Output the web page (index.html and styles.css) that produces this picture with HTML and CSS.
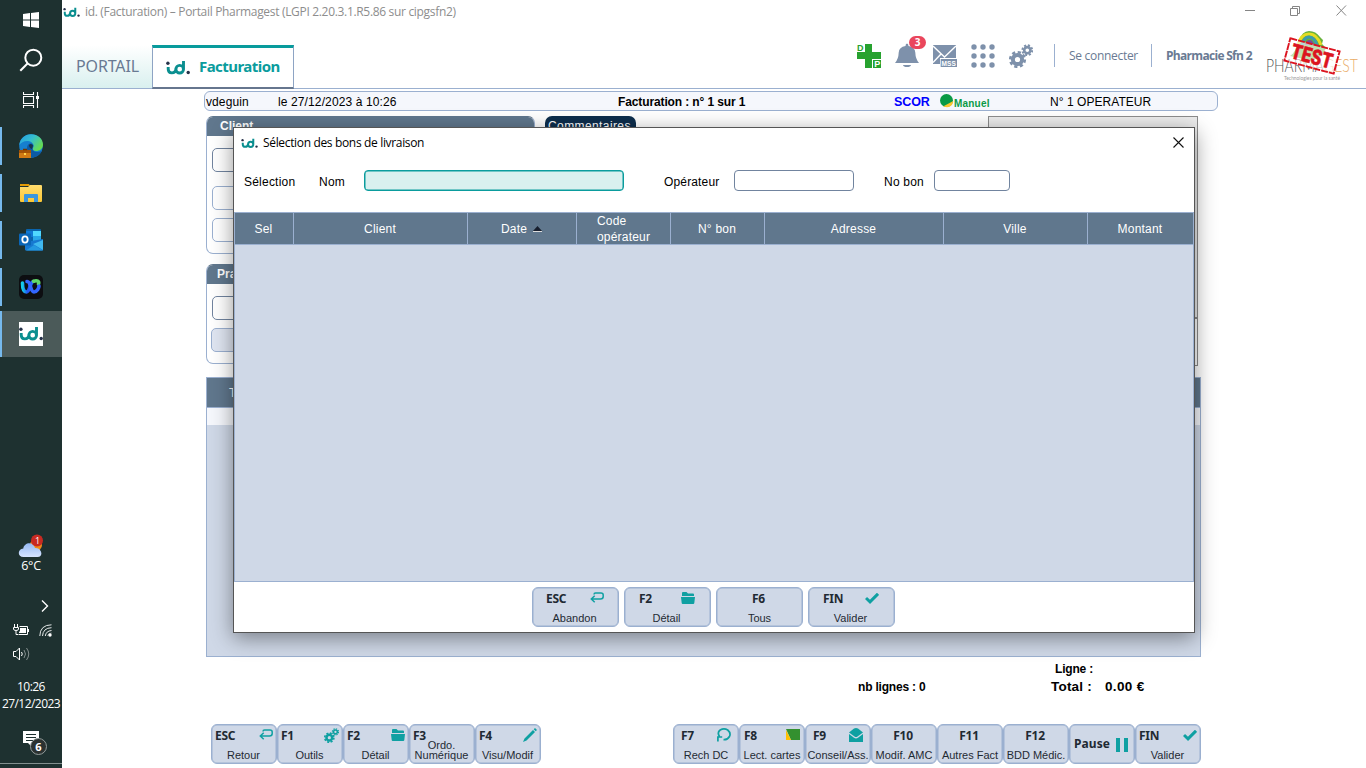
FILE: index.html
```html
<!DOCTYPE html>
<html lang="fr">
<head>
<meta charset="utf-8">
<title>id. (Facturation) – Portail Pharmagest</title>
<link rel="stylesheet" href="styles.css">
</head>
<body>
<svg class="defs" width="0" height="0">
  <defs>
    <symbol id="logo" viewBox="0 0 24 16">
      <path d="M2.200 7v2c0 2.600 1.300 3.900 3.600 3.900 2.300 0 3.900-1.500 4.100-4M13.700 5.400a3.800 3.800 0 1 0 0 7.600 3.800 3.800 0 0 0 0-7.600M17.500 1V9.500" fill="none" stroke="#0b8f90" stroke-width="2.900"/>
      <circle cx="1.900" cy="3.200" r="1.700" fill="#26324a"/><circle cx="22.200" cy="12.500" r="1.700" fill="#26324a"/>
    </symbol>
    <symbol id="return" viewBox="0 0 14 12"><path d="M4 2.500Q4 1 5.500 1H11Q13.200 1 13.200 3V4.500Q13.200 7 10.500 7H1.500M4.700 3.700L1.300 7L4.700 10.300" fill="none" stroke="#0fa0a2" stroke-width="1.500"/></symbol>
    <symbol id="folder" viewBox="0 0 14 12"><path d="M1 4V1Q1 0 2 0H5.500L7 1.500H12Q13 1.500 13 2.500V4ZM0 5H14L13.300 11Q13.200 12 12.300 12H1.700Q.8 12 .7 11Z" fill="#0fa0a2"/></symbol>
    <symbol id="check" viewBox="0 0 14 11"><path d="M1 5L5 8.800L13 .8" fill="none" stroke="#0fa0a2" stroke-width="3"/></symbol>
    <symbol id="gears" viewBox="0 0 24 24">
      <g fill="none" stroke="currentColor">
        <circle cx="8.500" cy="15.500" r="4.600" stroke-width="4"/>
        <circle cx="8.500" cy="15.500" r="7.300" stroke-width="2.600" stroke-dasharray="3.200 2.533"/>
        <circle cx="18.300" cy="6.200" r="3.100" stroke-width="2.600"/>
        <circle cx="18.300" cy="6.200" r="4.900" stroke-width="2" stroke-dasharray="2.100 1.748"/>
      </g>
    </symbol>
    <linearGradient id="edge" x1="0" y1="0" x2="1" y2=".6"><stop offset="0" stop-color="#249be0"/><stop offset=".5" stop-color="#35bdd0"/><stop offset="1" stop-color="#67dc50"/></linearGradient>
    <linearGradient id="cloud" x1="0" y1="0" x2="0" y2="1"><stop offset="0" stop-color="#94b8f3"/><stop offset="1" stop-color="#d6e4ff"/></linearGradient>
    <linearGradient id="webex" x1="0" y1="0" x2="1" y2="0"><stop offset="0" stop-color="#14cbe8"/><stop offset=".45" stop-color="#2454f5"/><stop offset="1" stop-color="#2966ff"/></linearGradient>
    <linearGradient id="file" x1="0" y1="0" x2="0" y2="1"><stop offset="0" stop-color="#ffdc6e"/><stop offset="1" stop-color="#fbc735"/></linearGradient>
  </defs>
</svg>

<nav class="taskbar">
  <div class="sys"><svg width="16" height="16" viewBox="0 0 16 16" fill="#fff"><path d="M0 2L7 1V7.500H0ZM8 .9L16 0V7.500H8ZM0 8.500H7V15L0 14ZM8 8.500H16V16L8 15Z"/></svg></div>
  <div class="sys"><svg width="24" height="24" viewBox="0 0 24 24" fill="none" stroke="#fff" stroke-width="2"><circle cx="14.300" cy="9.700" r="8"/><path d="M8.500 15.500L1.300 22.700"/></svg></div>
  <div class="sys"><svg width="16" height="16" viewBox="0 0 16 16" fill="none" stroke="#fff"><path d="M.5 0V2.500H10.500V0M.5 16V13.500H10.500V16M.5 4.500H10.500V11.500H.5ZM14.500 0V16" stroke-width="1.100"/><path d="M13 4H16V7H13Z" fill="#fff" stroke="none"/></svg></div>
  <div class="apps">
    <div class="task"><svg width="24" height="24" viewBox="0 0 24 24"><circle cx="12" cy="12" r="11.800" fill="#167fce"/><path d="M.3 11C1 4.500 6 .2 12 .2C19 .2 24 5 24 10.500C24 15 20.500 17 17 17C14 17 13 15.500 14 14C16 10.500 13 7.500 9 7C5 6.700 2 8.500 .3 11Z" fill="url(#edge)"/><path d="M8 14C8 11 10 9 12.500 9.500C15 10.500 14.500 12.500 13.700 14C13 16 15 18 18 18Q21 18 23 16.500C21 22 15 24.500 10.500 23.200C7 21 7.500 17 8 14Z" fill="#0c5aa5"/><path d="M10 11Q12 8.700 14 11.500L13 15Q10 14 10 11" fill="#18334b"/><rect y="16" width="12" height="8" fill="#d17a13"/><path d="M0 16H12V19H0Z" fill="#a45206"/><path d="M4 15.500H8" stroke="#6f3600" stroke-width="1.500"/><rect x="5" y="19" width="2" height="2" fill="#ffd24a"/></svg></div>
    <div class="task"><svg width="22" height="19" viewBox="0 0 22 19"><path d="M0 0H9L10 2H0Z" fill="#e29a05"/><path d="M0 3H8L10 1H21Q22 1 22 2V17Q22 18 21 18H1Q0 18 0 17Z" fill="url(#file)"/><path d="M4 18V11Q4 10 5 10H17Q18 10 18 11V18H14V14H8V18Z" fill="#3a96dd"/></svg></div>
    <div class="task"><svg width="24" height="24" viewBox="0 0 24 24"><rect x="7" y="1" width="15" height="17" rx="1" fill="#0a64ad"/><path d="M7 3H14V9H7Z" fill="#0f78d4"/><path d="M14 3H22V9H14Z" fill="#50d9ff"/><path d="M14 8H22V13H14Z" fill="#28a8ea"/><path d="M6 14L24 11V22Q24 22.500 23 22.500H7Q6 22.500 6 21.500Z" fill="#1678d0"/><path d="M24 12V22L14 16Z" fill="#40b9ef"/><path d="M7 22.500L15 17L24 22.500Z" fill="#2398e0"/><rect y="5.500" width="12" height="12" rx="1" fill="#0a66b8"/><ellipse cx="6" cy="11.500" rx="2.700" ry="3.100" fill="none" stroke="#fff" stroke-width="1.800"/></svg></div>
    <div class="task"><svg width="24" height="24" viewBox="0 0 24 24"><rect width="24" height="24" rx="5" fill="#0d0e11"/><g fill="none" stroke-linecap="round" stroke-width="3.600"><path d="M3.500 8C3.500 14 5 17 7.500 17C11 17 11 6.500 14.500 6.500" stroke="url(#webex)"/><path d="M14.500 6.200C18 5 20.500 6 19.500 9" stroke="#60d86a"/><path d="M8 6.500C12 6 11 17 15 17C18 17 20 13 20 11" stroke="#3266ff"/></g></svg></div>
    <div class="task active"><span class="idtile"><svg width="24" height="16"><use href="#logo"/></svg></span></div>
  </div>
  <div class="weather">
    <svg width="26" height="25" viewBox="0 0 26 25"><circle cx="18" cy="11" r="6" fill="#f08a1a"/><path d="M5.500 23C-1 23-.5 15 5.300 14.500C6 8 15.500 7 17 14C23 13 26.500 22.500 19.500 23Z" fill="url(#cloud)"/><circle cx="19" cy="6.500" r="6" fill="#c82a22"/></svg>
    <b class="alert">1</b>
    <span>6°C</span>
  </div>
  <div class="chev"><svg width="8" height="12" viewBox="0 0 8 12" fill="none" stroke="#fff" stroke-width="1.400"><path d="M1 .5L6.500 6L1 11.500"/></svg></div>
  <div class="tray">
    <svg width="17" height="13" viewBox="0 0 17 13" fill="none" stroke="#fff"><path d="M6.500 2.500H14.500V10.500H5.500M1.500 0V3M4.500 0V3M.5 3.500H5.500V5Q5.500 6.500 3 6.500Q.5 6.500 .5 5ZM3 6.500V10.500H5"/><path d="M7 4H13V9H6V7.500H7Z" fill="#fff" stroke="none"/><path d="M15.500 5V8"/></svg>
    <svg width="14" height="13" viewBox="0 0 14 13" fill="none" stroke="#e4e8e8"><path d="M.8 12Q1 1 12.500 .8M3.500 12Q4 4 12.500 3.700M6.300 12Q7 7 12.500 6.500" /><circle cx="11" cy="11" r="1.700" fill="#fff" stroke="none"/><path d="M8.500 12Q9 9.500 12.500 9" opacity=".6"/></svg>
    <svg width="17" height="14" viewBox="0 0 17 14" fill="none" stroke="#fff"><path d="M.5 4.500H3L6.500 1V13L3 9.500H.5Z"/><path d="M8.500 5Q10 7 8.500 9"/><path d="M11 3Q14 7 11 11M13.500 1Q18 7 13.500 13" opacity=".45"/></svg>
  </div>
  <div class="clock"><span>10:26</span><span>27/12/2023</span></div>
  <div class="notif"><svg width="16" height="16" viewBox="0 0 16 16"><path d="M0 0H16V12H9V16L5 12H0Z" fill="#fff"/><path d="M3 3.500H13M3 6.500H13M3 9.500H10" stroke="#1e3130"/></svg><b>6</b></div>
</nav>

<main class="app">
  <div class="titlebar">
    <svg width="17" height="11"><use href="#logo"/></svg>
    <span class="wtitle">id. (Facturation) – Portail Pharmagest (LGPI 2.20.3.1.R5.86 sur cipgsfn2)</span>
    <svg class="winctl" width="102" height="12" viewBox="0 0 102 12" fill="none" stroke="#858585"><path d="M0 5.500H10M45.500 3.500H52.500V10.500H45.500ZM47.500 3V1.500H54.500V8.500H53M91.500 .5L101 10.500M101 .5L91.500 10.500"/></svg>
  </div>
  <header class="header">
    <div class="tab portal"><span>PORTAIL</span></div>
    <div class="tab current"><svg width="24" height="16"><use href="#logo"/></svg><span>Facturation</span></div>
    <div class="tools">
      <svg width="26" height="26" viewBox="0 0 26 26"><path d="M9 1H16V9H25V16H16V25H9V16H1V9H9Z" fill="#27a22f"/><rect x="0" y="0" width="8.500" height="8" fill="#fff"/><path d="M17 17H25V25H17Z" fill="#27a22f"/><text x="1" y="7.700" class="dp-d">D</text><text x="18.200" y="24.200" class="dp-p">P</text></svg>
      <div class="bell"><svg width="24" height="24" viewBox="0 0 24 24" fill="#7e91ab"><path d="M0 20Q3.500 16 3.700 9.500Q4 4 10.500 3Q10.500 .5 12 .5T13.500 3Q20 4 20.300 9.500Q20.500 16 24 20ZM8 22H16Q15.500 24 12 24T8 22Z"/></svg><b>3</b></div>
      <svg class="mail" width="25" height="23" viewBox="0 0 25 23"><path d="M0 0H23V13H7V19H0Z" fill="#7e91ab"/><path d="M0 1L11.500 12L23 1M0 17.500L8 9" stroke="#fff" fill="none" stroke-width="1.400"/><path d="M7 13H25V23H7Z" fill="#fff"/><path d="M7.700 14H24V22H7.700Z" fill="#7e91ab"/><text x="8.500" y="20.500" class="mss">MSS</text></svg>
      <svg width="24" height="24" viewBox="0 0 24 24" fill="#7e91ab"><circle cx="3" cy="3" r="2.700"/><circle cx="12" cy="3" r="2.700"/><circle cx="21" cy="3" r="2.700"/><circle cx="3" cy="12" r="2.700"/><circle cx="12" cy="12" r="2.700"/><circle cx="21" cy="12" r="2.700"/><circle cx="3" cy="21" r="2.700"/><circle cx="12" cy="21" r="2.700"/><circle cx="21" cy="21" r="2.700"/></svg>
      <svg class="cog" width="24" height="24"><use href="#gears"/></svg>
    </div>
    <div class="login"><span>Se connecter</span></div>
    <div class="pharm"><span>Pharmacie Sfn 2</span></div>
    <div class="brand">
      <svg width="99" height="60" viewBox="0 0 99 60">
        <path d="M24 28Q30 24 33 13Q36 3 43 3Q50 3 54 9L57 12L56 16L60 20L58 24Q50 35 38 31Z" fill="#68b23d"/>
        <path d="M32 17Q35 6 43 6T55 17" fill="none" stroke="#e5dc22" stroke-width="3"/><path d="M36 17Q38 9 43 9T51 17" fill="none" stroke="#3c9dab" stroke-width="3"/><path d="M39 17Q40 12 43.500 12T48 17" fill="#794b99"/>
        <g transform="scale(.82 1)"><text x="0" y="44" class="ph1">PHARMA<tspan class="ph2">GEST</tspan></text></g>
        <text x="18" y="52" class="ph3" textLength="56" lengthAdjust="spacingAndGlyphs">Technologies pour la santé</text>
        <g transform="translate(46 28) rotate(15)"><rect x="-25.500" y="-11.500" width="51" height="23" fill="#fff" fill-opacity=".6" stroke="#dc1420" stroke-width="1.900" stroke-dasharray="7 1"/><text x="-21" y="7.500" class="stamp" textLength="42" lengthAdjust="spacingAndGlyphs">TEST</text></g>
      </svg>
    </div>
  </header>

  <section class="work">
    <div class="info">
      <span class="i1">vdeguin</span><span class="i2">le 27/12/2023 à 10:26</span><b class="i3">Facturation : n° 1 sur 1</b><b class="i4">SCOR</b>
      <svg width="14" height="14" viewBox="0 0 14 14"><circle cx="6.500" cy="6.500" r="6.500" fill="#0a9a45"/><path d="M3 12.500L13.300 7Q12.500 13 7 13.300Z" fill="#fbc62c"/></svg>
      <b class="i5">Manuel</b><span class="i6">N° 1 OPERATEUR</span>
    </div>
    <div class="panels">
      <div class="left">
        <div class="panel client"><h2><span>Client</span></h2><i class="field dark"></i><i class="field second"></i><i class="field third"></i></div>
        <div class="panel prat"><h2><span>Praticien</span></h2><i class="field dark"></i><i class="field fill"></i></div>
      </div>
      <div class="comment"><span>Commentaires</span></div>
      <div class="side"><div></div><div></div></div>
    </div>
    <div class="lines"><div class="lhead"><span>T</span></div><div class="lrow"></div></div>
    <div class="totals">
      <b class="nb">nb lignes : 0</b>
      <div class="sum"><b class="lig">Ligne :</b><b class="tot">Total :</b><b class="amt">0.00 €</b></div>
    </div>
    <div class="keys">
      <div class="key"><b>ESC</b><svg width="14" height="12"><use href="#return"/></svg><span>Retour</span></div>
      <div class="key"><b>F1</b><svg class="teal" width="15" height="15"><use href="#gears"/></svg><span>Outils</span></div>
      <div class="key"><b>F2</b><svg width="14" height="12"><use href="#folder"/></svg><span>Détail</span></div>
      <div class="key two"><b>F3</b><span>Ordo.<br>Numérique</span></div>
      <div class="key"><b>F4</b><svg width="14" height="14" viewBox="0 0 14 14" fill="#0fa0a2"><path d="M0 14L1.500 10.500L10 2L12 4L3.500 12.500ZM10.700 1.300L12 0L14 2L12.700 3.300Z"/></svg><span>Visu/Modif</span></div>
      <div class="spacer"></div>
      <div class="key r7"><b>F7</b><svg width="14" height="14" viewBox="0 0 14 14" fill="none" stroke="#0fa0a2" stroke-width="1.700"><path d="M2.500 8.500Q-.2 4.500 3.200 2Q7 -.2 10.700 2Q14.200 5 12.500 8.500Q10.500 12 6.500 11.700M.9 13.500V9H5.200"/></svg><span>Rech DC</span></div>
      <div class="key r8"><b>F8</b><svg width="14" height="12" viewBox="0 0 14 12"><path d="M0 0H14V11H5Z" fill="#33902f"/><path d="M0 1L5 11H0Z" fill="#ffc000"/></svg><span>Lect. cartes</span></div>
      <div class="key r7"><b>F9</b><svg width="14" height="14" viewBox="0 0 14 14" fill="#0fa0a2"><path d="M0 4.500L5 .6Q7 -.6 9 .6L14 4.500L8.500 8.500Q7 9.500 5.500 8.500ZM0 6L5 9.800Q7 11.200 9 9.800L14 6V14H0Z"/></svg><span>Conseil/Ass.</span></div>
      <div class="key mid"><b>F10</b><span>Modif. AMC</span></div>
      <div class="key mid"><b>F11</b><span>Autres Fact</span></div>
      <div class="key mid"><b>F12</b><span>BDD Médic.</span></div>
      <div class="key pause"><b>Pause</b><svg width="12" height="14" fill="#0fa0a2"><path d="M0 0H4V14H0ZM8 0H12V14H8Z"/></svg></div>
      <div class="key"><b>FIN</b><svg width="14" height="11"><use href="#check"/></svg><span>Valider</span></div>
    </div>
  </section>
</main>

<section class="modal">
  <div class="mtitle"><svg width="17" height="11"><use href="#logo"/></svg><span>Sélection des bons de livraison</span><svg class="close" width="11" height="11" viewBox="0 0 11 11" fill="none" stroke="#111" stroke-width="1.100"><path d="M.5 .5L10.500 10.500M10.500 .5L.5 10.500"/></svg></div>
  <div class="filters">
    <span class="fl-sel">Sélection</span><span class="fl-nom">Nom</span><i class="inp nom"></i><span class="fl-op">Opérateur</span><i class="inp op"></i><span class="fl-no">No bon</span><i class="inp no"></i>
  </div>
  <div class="grid">
    <div class="ghead"><span>Sel</span><span>Client</span><span>Date <svg width="9" height="6" viewBox="0 0 9 6"><path d="M4.500 0L9 5H0Z" fill="#171e2d"/><path d="M0 5.500H9" stroke="#ddd"/></svg></span><span class="code">Code<br>opérateur</span><span>N° bon</span><span>Adresse</span><span>Ville</span><span>Montant</span></div>
    <div class="gbody"></div>
  </div>
  <div class="mkeys">
    <div class="key"><b>ESC</b><svg width="14" height="12"><use href="#return"/></svg><span>Abandon</span></div>
    <div class="key"><b>F2</b><svg width="14" height="12"><use href="#folder"/></svg><span>Détail</span></div>
    <div class="key mid"><b>F6</b><span>Tous</span></div>
    <div class="key"><b>FIN</b><svg width="14" height="11"><use href="#check"/></svg><span>Valider</span></div>
  </div>
</section>
</body>
</html>
```
FILE: styles.css
```css
* { box-sizing: border-box; }
body { margin: 0; width: 1366px; height: 768px; overflow: hidden; display: flex; position: relative; background: #fff; font: 12px/16px "Liberation Sans", Arial, sans-serif; color: #000; }
svg { display: block; flex: none; }
span, b { white-space: nowrap; }
.defs { position: absolute; }

/* Windows taskbar */
.taskbar { width: 62px; height: 768px; background: #1e3130; color: #fff; display: flex; flex-direction: column; flex: none; font-family: "Open Sans", sans-serif; }
.sys { height: 40px; display: flex; align-items: center; justify-content: center; }
.apps { display: flex; flex-direction: column; padding-top: 2px; }
.task { height: 38px; margin: 5px 0 4px; border-left: 2px solid #76b9ed; display: flex; align-items: center; justify-content: center; padding-right: 2px; }
.task.active { height: 46px; margin: 1px 0 0; background: #4b5a59; }
.idtile { width: 24px; height: 24px; background: #fff; display: flex; align-items: center; }
.weather { margin-top: 177px; height: 41px; display: flex; flex-direction: column; align-items: center; position: relative; }
.weather span { font-size: 12.500px; line-height: 15px; margin-top: -1px; letter-spacing: -.3px; }
.alert { position: absolute; left: 35px; top: -1px; font-size: 9px; font-weight: 400; }
.chev { height: 14px; margin: 25px 0 0 41px; }
.tray { display: grid; grid-template-columns: 26px 14px; row-gap: 10px; margin: 10px 0 1px 13px; align-items: center; }
.clock { display: flex; flex-direction: column; align-items: center; margin-top: 16px; line-height: 17px; font-size: 12px; letter-spacing: -.55px; }
.notif { margin: 19px 0 0 23px; height: 32px; position: relative; }
.notif b { position: absolute; left: 7px; top: 7px; width: 17px; height: 17px; border: 1px solid #929b9a; border-radius: 50%; background: #2b3231; font-size: 11px; line-height: 15px; text-align: center; }
.taskbar::after { content: ""; border-top: 1px solid #82908f; }

/* Window frame and header */
.app { width: 1304px; display: flex; flex-direction: column; }
.titlebar { height: 24px; display: flex; align-items: center; padding: 0 19px 0 1px; color: #8d8d8d; font-family: "Open Sans", sans-serif; }
.wtitle { margin-left: 5px; font-size: 12px; letter-spacing: -.32px; }
.winctl { margin: -3px 0 0 auto; }
.header { height: 65px; display: flex; align-items: flex-end; border-bottom: 1px solid #9bb0d0; font-family: "Noto Sans", sans-serif; color: #697a93; }
.tab { display: flex; align-items: center; }
.portal { width: 90px; height: 43px; padding: 0 0 2px 14px; background: linear-gradient(#fff, #d9f0ef); font-size: 16px; letter-spacing: -.15px; }
.current { width: 142px; height: 44px; margin-bottom: -1px; background: #fff; border: 1px solid #8ea4c4; border-top: 3px solid #089b9c; border-bottom: 2px solid #66768e; padding-left: 13px; gap: 9px; color: #0a9c9d; font-weight: 700; font-size: 15px; letter-spacing: -.55px; }
.current span { margin-top: -4px; }
.tools { display: flex; align-items: center; height: 64px; margin-left: 562px; gap: 13px; }
.bell { position: relative; margin-top: -2px; }
.bell b { position: absolute; left: 14px; top: -7px; width: 17px; height: 13px; border-radius: 7px; background: #ea465c; color: #fff; font-size: 10px; line-height: 13px; text-align: center; }
.tools .mail { margin: 0 0 0 1px; }
.cog { color: #7e91ab; margin-left: 1px; }
.dp-d, .dp-p { font: 700 9px "Liberation Sans", sans-serif; fill: #27a22f; }
.dp-p { fill: #fff; }
.mss { font: 700 6.500px "Liberation Sans", sans-serif; fill: #fff; letter-spacing: .1px; }
.login, .pharm { height: 23px; margin-bottom: 21px; border-left: 1px solid #9bb0d0; padding-left: 14px; font: 12px/23px "Open Sans", sans-serif; letter-spacing: -.3px; }
.login { margin-left: 21px; width: 97px; }
.pharm { width: 115px; font-weight: 700; letter-spacing: -.7px; }
.brand { height: 60px; }
.ph1 { font: 300 17px Lato, sans-serif; fill: #555; }
.ph2 { fill: #e9ac65; }
.ph3 { font: 6px Lato, sans-serif; fill: #999; }
.stamp { font: 900 21px Roboto, sans-serif; fill: #dc1420; stroke: #dc1420; stroke-width: .5px; }

/* Invoice screen behind the dialog */
.work { padding: 2px 0 0 142px; }
.info { width: 1014px; height: 20px; display: flex; align-items: center; background: #f5f7fc; border: 1px solid #9bb0d0; border-radius: 6px; padding: 1px 0 0 1px; }
.i1 { width: 72px; letter-spacing: .1px; } .i2 { width: 340px; letter-spacing: .12px; } .i3 { width: 276px; letter-spacing: -.12px; } .i4 { width: 46px; color: #00f; font-size: 12.500px; letter-spacing: -.1px; }
.info svg { margin-top: -2px; }
.i5 { width: 96px; padding-top: 4px; color: #0a9a45; font-size: 10px; letter-spacing: .2px; } .i6 { letter-spacing: .05px; }
.panels { display: flex; height: 266px; padding: 5px 0 0 2px; }
.left { width: 329px; }
.panel { border: 1px solid #9bb0d0; border-top-color: #60778d; border-radius: 7px; overflow: hidden; }
.panel h2 { margin: 0; height: 19px; background: #60778d; color: #fff; font-size: 12px; line-height: 18px; padding-left: 13px; }
.client { height: 138px; } .prat { height: 100px; margin-top: 10px; }
.prat h2 { padding-left: 10px; }
.field { display: block; width: 250px; height: 24px; margin: 12px 0 0 5px; border: 1px solid #9bb0d0; border-radius: 5px; background: #fff; }
.field.dark { border-color: #71849f; }
.field.second { margin-top: 14px; } .field.third { margin-top: 8px; }
.field.fill { margin: 8px 0 0 4px; background: #dfe5f1; }
.comment { margin-left: 10px; width: 91px; height: 22px; background: #0d2e4d; border-radius: 7px 7px 0 0; color: #fff; padding: 2px 0 0 3px; letter-spacing: .4px; }
.side { width: 210px; height: 250px; margin-left: 352px; display: flex; flex-direction: column; }
.side div { border: 1px solid #8c8c8c; height: 202px; background: #ececec; }
.side div + div { height: 48px; background: #fff; }
.lines { margin-left: 2px; width: 995px; height: 280px; background: #cfd8e7; border: 1px solid #9bb0d0; }
.lhead { height: 30px; background: #60778d; border-bottom: 1px solid #9bb0d0; color: #fff; padding: 7px 0 0 22px; }
.lrow { height: 17px; background: #f5f7fc; }
.totals { height: 67px; display: flex; }
.nb { width: 193px; margin-left: 654px; padding-top: 22px; letter-spacing: -.2px; }
.sum { display: grid; grid-template-columns: 54px auto; padding-top: 4px; height: 40px; align-content: start; row-gap: 2px; }
.lig { grid-column: 1 / 3; padding-left: 4px; letter-spacing: -.2px; }
.tot, .amt { font-size: 13.500px; letter-spacing: .2px; }
.amt { letter-spacing: .35px; }
.keys { display: flex; padding-left: 7px; }
.spacer { width: 132px; }
.key { position: relative; width: 66px; height: 40px; display: grid; grid-template: 22px 16px / auto auto; align-items: center; justify-content: space-between; border: 1px solid #9bb0d0; border-radius: 6px; background: #cfd8e7; box-shadow: inset 0 0 0 .5px #9bb0d0; padding: 0 3px; color: #1f2a33; }
.key b { font: 700 12px/16px "Noto Sans", sans-serif; letter-spacing: -.25px; }
.key svg { justify-self: end; margin-top: -2px; }
.key span { grid-column: 1 / 3; grid-row: 2; justify-self: center; font-size: 11px; margin: 0 1px 0 0; }
.key .teal { color: #0fa0a2; }
.key.two span { line-height: 10px; margin-top: -10px; text-align: center; }
.r7 { padding: 0 7px; } .r8 { padding: 0 4px; }
.key.r7 span, .key.r8 span { margin-left: -8px; margin-right: -8px; }
.mid { justify-content: center; justify-items: center; grid-template-columns: auto; padding: 0; }
.key.mid b { margin-right: 2px; }
.key.mid span { grid-column: 1; margin: 0; }
.pause { grid-template: 38px / auto auto; padding: 0 6px 0 4px; }
.pause b { letter-spacing: .1px; }
.key.pause svg { margin-top: 1px; }

/* Dialog window above the invoice screen */
.modal { position: absolute; left: 233px; top: 127px; width: 962px; height: 506px; background: #fff; border: 1px solid #555; box-shadow: 0 5px 20px rgba(0,0,0,.42); display: flex; flex-direction: column; }
.mtitle { height: 30px; display: flex; align-items: center; padding: 0 10px 0 7px; font-family: "Open Sans", sans-serif; }
.mtitle span { margin-left: 5px; font-size: 12px; letter-spacing: -.34px; }
.close { margin-left: auto; margin-top: -2px; }
.filters { display: flex; height: 54px; padding: 12px 0 0 10px; line-height: 24px; letter-spacing: .22px; }
.fl-sel { width: 75px; } .fl-nom { width: 45px; } .fl-op { width: 70px; margin-left: 40px; letter-spacing: .15px; } .fl-no { width: 50px; margin-left: 30px; }
.inp { height: 21px; border: 1px solid #71849f; border-radius: 4px; }
.nom { width: 260px; background: #d9f0ef; border-color: #0a9c9d; box-shadow: inset 0 0 0 .5px #0a9c9d; } .op { width: 120px; } .no { width: 76px; }
.grid { height: 370px; width: 960px; background: #cfd8e7; border: 1px solid #9bb0d0; }
.ghead { display: grid; grid-template-columns: 59px 174px 109px 94px 94px 179px 144px 105px; height: 32px; background: #60778d; border-bottom: 1px solid #9bb0d0; color: #fff; letter-spacing: .2px; }
.ghead > span { display: flex; align-items: center; justify-content: center; gap: 6px; border-right: 1px solid #9bb0d0; padding-right: 1px; }
.ghead > span:last-child { border: 0; }
.ghead > .code { justify-content: flex-start; padding-left: 20px; }
.mkeys { display: flex; gap: 5px; padding: 5px 0 0 298px; }
.mkeys .key { width: 87px; padding: 0 14px 0 13px; }
.mkeys .key:not(:first-child) { padding: 0 15px 0 14px; }
.mkeys .key.mid:not(:first-child) { padding: 0; }
```
